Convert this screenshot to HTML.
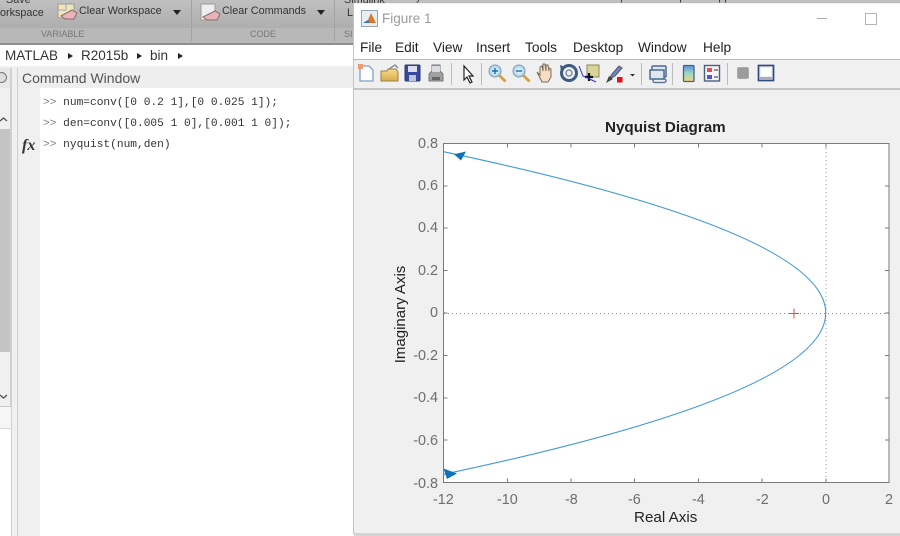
<!DOCTYPE html>
<html>
<head>
<meta charset="utf-8">
<style>
html,body{margin:0;padding:0;background:#fff}
#p{position:relative;width:900px;height:536px;overflow:hidden;background:#fff;font-family:"Liberation Sans",sans-serif;filter:blur(.35px)}
.a{position:absolute}
.t{position:absolute;white-space:nowrap;line-height:1}
.mono{font-family:"Liberation Mono",monospace;font-size:11.2px;color:#333}
.pr{color:#8a7a72}
.m{position:absolute;top:40px;font-size:13.7px;color:#222;line-height:16px;white-space:nowrap}
.tk{position:absolute;font-size:14.4px;color:#6e6e6e;line-height:16px;white-space:nowrap}
</style>
</head>
<body>
<div id="p">
<!-- ribbon -->
<div class="a" style="left:0;top:0;width:900px;height:28px;background:linear-gradient(#c0c0c0,#aeaeae)"></div>
<div class="a" style="left:0;top:28px;width:900px;height:15px;background:#b8b8b8"></div>
<div class="a" style="left:0;top:43px;width:900px;height:2px;background:#8e8e8e"></div>
<div class="a" style="left:191px;top:0;width:1px;height:41px;background:#a2a2a2"></div>
<div class="a" style="left:334px;top:0;width:1px;height:41px;background:#a2a2a2"></div>
<div class="t" style="left:6px;top:-5px;font-size:10.8px;color:#333">Save</div>
<div class="t" style="left:-10px;top:8px;font-size:10.8px;color:#333">Workspace</div>
<svg class="a" style="left:56px;top:2px" width="24" height="20" viewBox="0 0 24 20">
<rect x="2" y="2" width="16" height="14" fill="#f2e6b8" stroke="#9a9a9a"/><path d="M10 2v6H2" stroke="#8fa8c8" fill="none"/>
<path d="M5 14l11-6 5 3-3 6H9z" fill="#e8b4b8" stroke="#8a6a6a"/></svg>
<div class="t" style="left:79px;top:6px;font-size:10.8px;color:#333">Clear Workspace</div>
<div class="a" style="left:173px;top:10px;border:4.500px solid transparent;border-top:5px solid #222;border-bottom:0"></div>
<svg class="a" style="left:199px;top:3px" width="24" height="20" viewBox="0 0 24 20">
<rect x="2" y="1" width="14" height="16" fill="#eee" stroke="#9a9a9a"/>
<path d="M4 14l12-6 5 3-3 6H8z" fill="#e8b4b8" stroke="#8a6a6a"/></svg>
<div class="t" style="left:222px;top:6px;font-size:10.8px;color:#333">Clear Commands</div>
<div class="a" style="left:317px;top:10px;border:4.500px solid transparent;border-top:5px solid #222;border-bottom:0"></div>
<div class="t" style="left:344px;top:-5px;font-size:10.8px;color:#333">Simulink</div>
<div class="t" style="left:347px;top:8px;font-size:10.8px;color:#333">L</div>
<div class="t" style="left:41px;top:30px;font-size:9px;color:#777">VARIABLE</div>
<div class="t" style="left:250px;top:30px;font-size:9px;color:#777">CODE</div>
<div class="t" style="left:344px;top:30px;font-size:9px;color:#777">SI</div>
<div class="t" style="left:540px;top:-8px;font-size:10.8px;color:#333">Add-Ons</div>
<div class="t" style="left:604px;top:-8px;font-size:10.8px;color:#333">Help</div>
<div class="t" style="left:662px;top:-8px;font-size:10.8px;color:#333">Request Support</div>
<div class="t" style="left:404px;top:-8px;font-size:10.8px;color:#333">Layout</div>
<!-- address -->
<div class="a" style="left:0;top:45px;width:354px;height:21px;background:#fff"></div>
<div class="t" style="left:5px;top:49px;font-size:13.500px;color:#333">MATLAB</div>
<div class="a" style="left:68px;top:53px;border:3.500px solid transparent;border-left:5px solid #222;border-right:0"></div>
<div class="t" style="left:81px;top:49px;font-size:13.500px;color:#333">R2015b</div>
<div class="a" style="left:137px;top:53px;border:3.500px solid transparent;border-left:5px solid #222;border-right:0"></div>
<div class="t" style="left:150px;top:49px;font-size:13.500px;color:#333">bin</div>
<div class="a" style="left:178px;top:53px;border:3.500px solid transparent;border-left:5px solid #222;border-right:0"></div>
<!-- left panel -->
<div class="a" style="left:0;top:66px;width:354px;height:470px;background:#f0f0f0"></div>
<div class="a" style="left:0;top:68px;width:11px;height:20px;background:#e8e8e8"></div>
<div class="a" style="left:-4px;top:72px;width:9px;height:9px;border:1px solid #777;border-radius:50%;background:#ddd"></div>
<div class="a" style="left:0;top:129px;width:10px;height:223px;background:#c4c4c4"></div>
<div class="a" style="left:10px;top:68px;width:2px;height:468px;background:#d0d0d0"></div>
<div class="a" style="left:0;top:406px;width:11px;height:23px;background:#f6f6f6;border-top:1px solid #c8c8c8;border-bottom:1px solid #d8d8d8;box-sizing:border-box"></div>
<div class="a" style="left:0;top:429px;width:11px;height:107px;background:#fff"></div>
<svg class="a" style="left:0;top:115px" width="8" height="8"><path d="M0 6l3.500-3 3.500 3" stroke="#555" stroke-width="1.400" fill="none"/></svg>
<svg class="a" style="left:0;top:393px" width="8" height="8"><path d="M0 2l3.500 3 3.500-3" stroke="#555" stroke-width="1.400" fill="none"/></svg>
<!-- command window -->
<div class="a" style="left:17px;top:68px;width:337px;height:20px;background:#eee;border-left:1px solid #d0d0d0;box-sizing:border-box"></div>
<div class="t" style="left:22px;top:71px;font-size:14px;color:#555">Command Window</div>
<div class="a" style="left:17px;top:88px;width:23px;height:448px;background:#f0f0f0;border-left:1px solid #d0d0d0;box-sizing:border-box"></div>
<div class="a" style="left:40px;top:88px;width:314px;height:448px;background:#fff"></div>
<div class="t mono" style="left:43px;top:98px"><span class="pr">&gt;&gt;</span> num=conv([0 0.2 1],[0 0.025 1]);</div>
<div class="t mono" style="left:43px;top:119px"><span class="pr">&gt;&gt;</span> den=conv([0.005 1 0],[0.001 1 0]);</div>
<div class="t mono" style="left:43px;top:140px"><span class="pr">&gt;&gt;</span> nyquist(num,den)</div>
<div class="t" style="left:22px;top:137px;font:italic bold 16px 'Liberation Serif',serif;color:#333">fx</div>
<!-- figure window -->
<div class="a" style="left:353px;top:3px;width:547px;height:531px;background:#f0f0f0;border-left:1px solid #c4c4c4;box-sizing:border-box"></div>
<div class="a" style="left:354px;top:4px;width:546px;height:56px;background:#fff"></div>
<div class="a" style="left:354px;top:533px;width:546px;height:3px;background:#d4d4d4"></div>
<svg class="a" style="left:361px;top:10px" width="18" height="17" viewBox="0 0 18 17">
<rect x=".5" y=".5" width="16" height="16" fill="#e6eef6" stroke="#9aa4ae"/><path d="M2 13l5-3 3-7 5 10z" fill="#d9772b"/><path d="M2 13l5-3 2 3z" fill="#3a76b8"/></svg>
<div class="t" style="left:382px;top:12px;font-size:13.500px;color:#9a9a9a">Figure 1</div>
<div class="a" style="left:817px;top:18px;width:10px;height:1px;background:#aaa"></div>
<div class="a" style="left:865px;top:13px;width:10px;height:10px;border:1.500px solid #b4b4b4"></div>
<div class="m" style="left:360px">File</div>
<div class="m" style="left:395px">Edit</div>
<div class="m" style="left:433px">View</div>
<div class="m" style="left:476px">Insert</div>
<div class="m" style="left:525px">Tools</div>
<div class="m" style="left:573px">Desktop</div>
<div class="m" style="left:638px">Window</div>
<div class="m" style="left:703px">Help</div>
<div class="a" style="left:354px;top:59px;width:546px;height:1.500px;background:#b8b8b8"></div>
<div class="a" style="left:354px;top:60px;width:546px;height:28px;background:#f0f0f0"></div>
<div class="a" style="left:354px;top:88px;width:546px;height:1.500px;background:#c4c4c4"></div>
<!-- toolbar icons -->
<svg class="a" style="left:354px;top:60px" width="440" height="28" viewBox="0 0 440 28">
<defs><linearGradient id="g" x1="0" y1="0" x2="0" y2="1"><stop offset="0" stop-color="#5a8ee0"/><stop offset=".5" stop-color="#9adcc0"/><stop offset="1" stop-color="#f4d080"/></linearGradient>
<linearGradient id="f" x1="0" y1="0" x2="0" y2="1"><stop offset="0" stop-color="#f6dc8c"/><stop offset="1" stop-color="#d8ac4c"/></linearGradient>
<radialGradient id="l"><stop offset="0" stop-color="#f4fbff"/><stop offset="1" stop-color="#a8cfe8"/></radialGradient></defs>
<path d="M6 6h9l4 4v11H6z" fill="#fbfdff" stroke="#7fa0c8" stroke-width="1.300"/><rect x="4" y="4" width="5" height="5" fill="#f09a70"/>
<path d="M27 21V11h6l1-2h8l2 3v9z" fill="url(#f)" stroke="#9a8040"/><path d="M35 9l6-4 3 3" fill="none" stroke="#7a8a9a" stroke-width="1.300"/>
<rect x="51" y="5" width="15" height="16" rx="1" fill="#3848a0" stroke="#28386e"/><rect x="54" y="6" width="9" height="6" fill="#dde"/><rect x="55" y="15" width="7" height="6" fill="#bcc4d8"/>
<path d="M75 14l3-3V5h8v6l3 3v7H75z" fill="#a0a0a0" stroke="#777"/><rect x="78" y="6" width="8" height="6" fill="#d8dce4"/><rect x="78" y="17" width="8" height="3" fill="#666"/>
<rect x="97" y="3" width="1" height="22" fill="#bbb"/>
<path d="M110 6v14l3-3 3 6 2-1-3-6h4z" fill="#fff" stroke="#222" stroke-width="1.200"/>
<rect x="127" y="3" width="1" height="22" fill="#bbb"/>
<circle cx="141" cy="11" r="6" fill="url(#l)" stroke="#7d9cb8"/><path d="M138 11h6M141 8v6" stroke="#1a6aa8" stroke-width="1.400"/><path d="M145.500 15.500l6 6" stroke="#d8a040" stroke-width="2.800"/>
<circle cx="165" cy="11" r="6" fill="url(#l)" stroke="#7d9cb8"/><path d="M162 11h6" stroke="#1a6aa8" stroke-width="1.400"/><path d="M169.500 15.500l6 6" stroke="#d8a040" stroke-width="2.800"/>
<path d="M183 12l3 3V7l2-1 1 5V4l2 0 1 7V5l2 0 1 6V8l2 1v8l-3 5h-6z" fill="#f8dcc4" stroke="#7a6a5a"/>
<circle cx="215" cy="13" r="7.500" fill="none" stroke="#3e5a80" stroke-width="3"/><circle cx="215" cy="13" r="3" fill="none" stroke="#7a90a8" stroke-width="1.500"/><path d="M206 5l5 2-4 4z" fill="#3e5a80"/>
<rect x="233" y="5" width="12" height="12" fill="#d8d49a" stroke="#8a8a50"/><path d="M231 17h8M235 13v8" stroke="#111" stroke-width="2.200"/><path d="M225 6l4 10 13 6" fill="none" stroke="#3030d0"/>
<path d="M255 19l3-5 7-8 3 2-7 8z" fill="#7088c8" stroke="#555"/><path d="M252 23l3-7 4 3z" fill="#444"/><rect x="263" y="17" width="5.500" height="5.500" fill="#e81010"/>
<path d="M276 14h5l-2.500 2.500z" fill="#333"/>
<rect x="287" y="3" width="1" height="22" fill="#bbb"/>
<rect x="298" y="6" width="14" height="11" rx="1" fill="#dfe6ee" stroke="#4a6a90" stroke-width="1.500"/><rect x="296" y="10" width="14" height="9" fill="#dfe6ee" stroke="#4a6a90" stroke-width="1.500"/><rect x="299" y="19" width="13" height="3.500" rx="1.700" fill="none" stroke="#5a7a9a" stroke-width="1.500"/>
<rect x="318" y="3" width="1" height="22" fill="#bbb"/>
<rect x="329.500" y="5.500" width="10.500" height="16" rx="1" fill="url(#g)" stroke="#4a6080" stroke-width="1.300"/>
<rect x="350.500" y="5.500" width="15" height="15.500" fill="#f4f4f4" stroke="#4a6080" stroke-width="1.400"/><rect x="353" y="8" width="5" height="4" fill="#e05050"/><rect x="353" y="15" width="5" height="4" fill="#5050e0"/><path d="M360 10h4M360 17h4" stroke="#333"/>
<rect x="373" y="3" width="1" height="22" fill="#bbb"/>
<rect x="383.500" y="7.500" width="11" height="11" rx="1.500" fill="#9c9c9c" stroke="#aaa"/>
<rect x="404.500" y="5.500" width="15" height="15" fill="#eee" stroke="#2e4a80" stroke-width="1.700"/><rect x="407" y="8" width="10" height="8" fill="#fff"/><rect x="406" y="17" width="12" height="3" fill="#aab"/>
</svg>
<!-- plot -->
<div class="t" style="left:605px;top:120px;font-size:15.200px;font-weight:bold;color:#222">Nyquist Diagram</div>
<svg class="a" style="left:0;top:0" width="900" height="536" viewBox="0 0 900 536">
<rect x="443.500" y="143.500" width="445.500" height="339" fill="#fff"/>
<path d="M826 144V482" stroke="#9a9a9a" stroke-dasharray="1 3" fill="none"/>
<path d="M444 313.500H889" stroke="#8a8a8a" stroke-dasharray="1 3" fill="none"/>
<path d="M443.500 151.700Q1208 313 443.500 474.300" fill="none" stroke="#3d98d4" stroke-width="1.100"/>
<path d="M454 154.300L466 151.500L461 160.500z" fill="#0f72bd"/>
<path d="M443.500 468.500L457 473.500L447 479z" fill="#0f72bd"/>
<path d="M789 313.500h10M794 308.500v10" stroke="#e04a50" stroke-width="1"/>
<path d="M443.500 143.500H889V482.500H443.500z" fill="none" stroke="#7a7a7a" stroke-width="1"/>
<path d="M507.500 143.500v4M571 143.500v4M634.500 143.500v4M698.500 143.500v4M762 143.500v4M826 143.500v4M507.500 482.500v-4M571 482.500v-4M634.500 482.500v-4M698.500 482.500v-4M762 482.500v-4M826 482.500v-4M443.500 186h4M443.500 228h4M443.500 270.500h4M443.500 313h4M443.500 355.500h4M443.500 398h4M443.500 440h4M889 186h-4M889 228h-4M889 270.500h-4M889 313h-4M889 355.500h-4M889 398h-4M889 440h-4" stroke="#7a7a7a" fill="none"/>
<text transform="translate(405 314.500) rotate(-90)" font-family="Liberation Sans" font-size="15" fill="#222" text-anchor="middle">Imaginary Axis</text>
</svg>
<div class="tk" style="right:462px;top:136px">0.8</div>
<div class="tk" style="right:462px;top:178px">0.6</div>
<div class="tk" style="right:462px;top:220px">0.4</div>
<div class="tk" style="right:462px;top:263px">0.2</div>
<div class="tk" style="right:462px;top:305px">0</div>
<div class="tk" style="right:462px;top:348px">-0.2</div>
<div class="tk" style="right:462px;top:390px">-0.4</div>
<div class="tk" style="right:462px;top:433px">-0.6</div>
<div class="tk" style="right:462px;top:476px">-0.8</div>
<div class="tk" style="left:433px;top:492px">-12</div>
<div class="tk" style="left:497px;top:492px">-10</div>
<div class="tk" style="left:565px;top:492px">-8</div>
<div class="tk" style="left:628px;top:492px">-6</div>
<div class="tk" style="left:692px;top:492px">-4</div>
<div class="tk" style="left:756px;top:492px">-2</div>
<div class="tk" style="left:822px;top:492px">0</div>
<div class="tk" style="left:885px;top:492px">2</div>
<div class="t" style="left:634px;top:510px;font-size:15.200px;color:#222">Real Axis</div>
</div>
</body>
</html>
